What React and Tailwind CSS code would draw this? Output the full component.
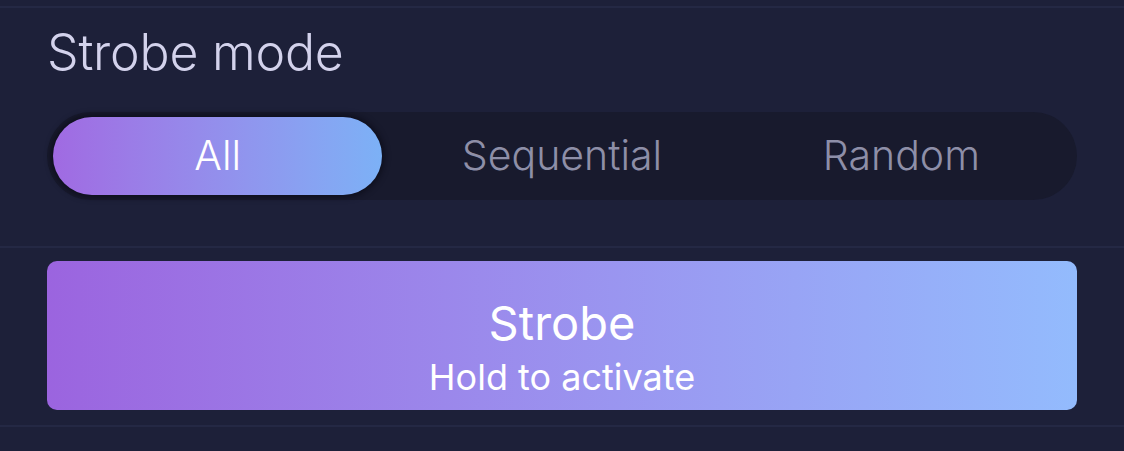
import { useState } from 'react';

const MODES = ['All', 'Sequential', 'Random'];

export default function App() {
  const [mode, setMode] = useState('All');

  return (
    <div
      className="w-[1124px] h-[451px] bg-[#1d2039] overflow-hidden"
      style={{ fontFamily: 'Inter, "Noto Sans", sans-serif' }}
    >
      <div className="h-[6px]" />
      <div className="h-[2px] bg-[#242844]" />

      <div className="px-[47px]">
        <h2 className="pt-[16px] text-[50px] leading-[56px] font-light text-[#d3d2ec] tracking-[-0.2px]">
          Strobe mode
        </h2>

        <div className="mt-[32px] h-[88px] rounded-full bg-[#181a2d] px-[6px] py-[5px] grid grid-cols-3">
          {MODES.map((m) => (
            <button
              key={m}
              onClick={() => setMode(m)}
              className={
                mode === m
                  ? 'mr-[10px] rounded-full bg-gradient-to-r from-[#a06ae2] to-[#7cb1f6] text-white text-[41px] font-light shadow-[0_0_6px_2px_rgba(8,9,20,0.7)]'
                  : 'rounded-full text-[#8e8fa8] text-[41px] font-light'
              }
            >
              {m}
            </button>
          ))}
        </div>
      </div>

      <div className="mt-[46px] h-[2px] bg-[#242844]" />

      <div className="px-[47px] pt-[13px]">
        <button className="w-full h-[149px] rounded-[10px] bg-gradient-to-r from-[#9b64df] to-[#93bbfd] flex flex-col items-center pt-[38px] text-white">
          <span className="text-[47px] leading-[48px] font-normal">Strobe</span>
          <span className="mt-[10px] text-[36px] leading-[40px] font-normal">Hold to activate</span>
        </button>
      </div>

      <div className="mt-[15px] h-[2px] bg-[#242844]" />
    </div>
  );
}
